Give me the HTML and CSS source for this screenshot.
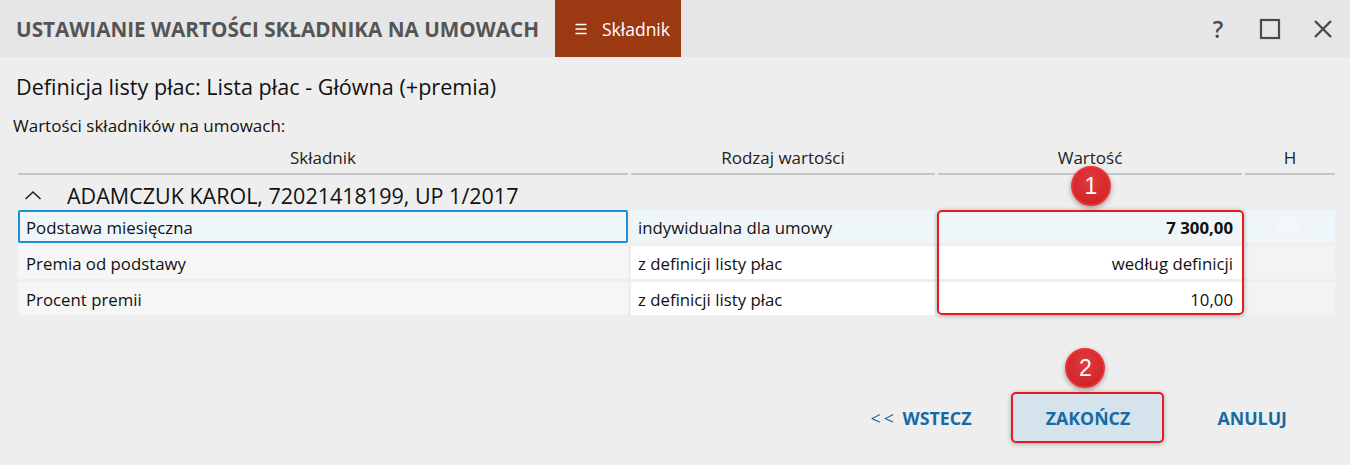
FILE: index.html
```html
<!DOCTYPE html>
<html lang="pl">
<head>
<meta charset="utf-8">
<link rel="stylesheet" href="styles.css">
</head>
<body>
<div class="window">
  <header class="titlebar">
    <h1 class="title">USTAWIANIE WARTOŚCI SKŁADNIKA NA UMOWACH</h1>
    <div class="tab">
      <svg class="burger" width="12" height="12" viewBox="0 0 12 12"><path d="M0.5 1.5 H11.5 M0.5 6 H11.5 M0.5 10.5 H11.5" stroke="#ffffff" stroke-width="1.3" fill="none"/></svg>
      <span>Składnik</span>
    </div>
    <div class="spacer"></div>
    <div class="wincontrols">
      <span class="help">?</span>
      <svg class="ico" width="22" height="22" viewBox="0 0 22 22"><rect x="2" y="2" width="18" height="18" fill="none" stroke="#4a4a4a" stroke-width="2.2"/></svg>
      <svg class="ico" width="22" height="22" viewBox="0 0 22 22"><path d="M3 3 L19 19 M19 3 L3 19" stroke="#4a4a4a" stroke-width="2.4" fill="none"/></svg>
    </div>
  </header>
  <main class="content">
    <div class="definition">Definicja listy płac: Lista płac - Główna (+premia)</div>
    <div class="caption">Wartości składników na umowach:</div>
    <div class="grid">
      <div class="head">
        <div class="hc c1">Składnik</div>
        <div class="hc c2">Rodzaj wartości</div>
        <div class="hc c3">Wartość</div>
        <div class="hc c4">H</div>
      </div>
      <div class="group">
        <svg class="caret" width="18" height="10" viewBox="0 0 18 10"><path d="M1.5 9 L9 2 L16.5 9" stroke="#222" stroke-width="1.6" fill="none"/></svg>
        <span>ADAMCZUK KAROL, 72021418199, UP 1/2017</span>
      </div>
      <div class="rows">
        <div class="row selected">
          <div class="cell c1 focus">Podstawa miesięczna</div>
          <div class="cell c2">indywidualna dla umowy</div>
          <div class="cell c3 num bold">7 300,00</div>
          <div class="cell c4"><span class="check"></span></div>
        </div>
        <div class="row">
          <div class="cell c1">Premia od podstawy</div>
          <div class="cell c2">z definicji listy płac</div>
          <div class="cell c3 num">według definicji</div>
          <div class="cell c4"></div>
        </div>
        <div class="row">
          <div class="cell c1">Procent premii</div>
          <div class="cell c2">z definicji listy płac</div>
          <div class="cell c3 num">10,00</div>
          <div class="cell c4"></div>
        </div>
        <div class="highlight"></div>
        <div class="badge b1">1</div>
      </div>
    </div>
    <footer class="actions">
      <button class="btn"><span class="arrows">&lt;&lt;</span> WSTECZ</button>
      <div class="primary-wrap">
        <button class="btn primary">ZAKOŃCZ</button>
        <div class="badge b2">2</div>
      </div>
      <button class="btn">ANULUJ</button>
    </footer>
  </main>
</div>
</body>
</html>
```
FILE: styles.css
```css
* { box-sizing: border-box; }
html, body { margin: 0; padding: 0; }
body {
  width: 1350px;
  height: 465px;
  background: #eeeeee;
  font-family: "Open Sans", "Noto Sans", sans-serif;
  color: #111111;
  overflow: hidden;
}
.window { display: flex; flex-direction: column; height: 465px; }
.titlebar {
  height: 58px;
  background: #e6e6e6;
  display: flex;
  align-items: stretch;
  border-bottom: 1px solid #ededed;
}
.title {
  margin: 0;
  padding-left: 16px;
  font-size: 20.7px;
  font-weight: 700;
  color: #555555;
  display: flex;
  align-items: center;
  width: 555px;
  white-space: nowrap;
}
.tab {
  background: #9b3a12;
  color: #ffffff;
  width: 126px;
  display: flex;
  align-items: center;
  gap: 15px;
  padding-left: 20px;
  font-size: 17.5px;
}
.burger { display: block; }
.spacer { flex: 1; }
.wincontrols {
  display: flex;
  align-items: center;
  gap: 31px;
  padding-right: 16px;
}
.help { font-size: 23px; color: #4a4a4a; font-weight: 600; width: 20px; text-align: center; }
.ico { display: block; }
.content { padding: 0 15px 0 18px; flex: 1; display: flex; flex-direction: column; }
.definition { font-size: 21.6px; margin-top: 15px; margin-left: -2px; line-height: 28px; white-space: nowrap; }
.caption { font-size: 17px; margin-top: 14px; margin-left: -5px; line-height: 22px; white-space: nowrap; }
.grid { margin-top: 4px; width: 1317px; }
.head { display: flex; height: 34px; gap: 3px; }
.hc {
  border-bottom: 2px solid #c6c6c6;
  display: flex; align-items: center; justify-content: center;
  font-size: 17px; color: #222;
}
.head .c1 { width: 610px; }
.head .c2 { width: 304px; }
.head .c3 { width: 304px; }
.head .c4 { width: 90px; }
.group {
  height: 35px;
  display: flex; align-items: center;
  font-size: 21.5px;
  padding-top: 5px;
  white-space: nowrap;
}
.caret { margin-left: 6px; margin-right: 25px; display: block; }
.rows { position: relative; display: flex; flex-direction: column; gap: 3px; }
.row { display: flex; height: 33px; gap: 3px; }
.cell {
  display: flex; align-items: center;
  font-size: 16.8px;
  padding: 2px 8px 0;
  background: #ffffff;
  white-space: nowrap;
}
.row .c1 { width: 610px; background: #f6f6f6; }
.row .c2 { width: 304px; padding-left: 7px; }
.row .c3 { width: 304px; }
.row .c4 { width: 90px; background: #f3f3f3; padding-top: 0; }
.num { justify-content: flex-end; padding-right: 9px; }
.bold { font-weight: 700; }
.row.selected .cell { background: #eef6fa; }
.row.selected .c1.focus { border: 2px solid #1b8fd8; border-radius: 2px; padding-left: 6px; padding-top: 2px; }
.check { display: block; width: 24px; height: 20px; background: #f4f6f7; margin-left: 24px; }
.highlight {
  position: absolute;
  left: 919px; top: 0; width: 307px; height: 105px;
  border: 2px solid #e8191f;
  border-radius: 5px;
  box-shadow: 0 1px 5px rgba(0,0,0,0.3);
  pointer-events: none;
}
.badge {
  position: absolute;
  width: 40px; height: 40px; border-radius: 50%;
  background: radial-gradient(circle at 50% 35%, #e23b3e 0%, #d2262b 70%, #c11d22 100%);
  border: 2px solid #ee3333;
  box-shadow: 0 2px 5px rgba(0,0,0,0.35);
  color: #ffffff;
  font-size: 23px;
  display: flex; align-items: center; justify-content: center;
  font-family: "Liberation Sans", Arial, sans-serif;
}
.b1 { left: 1053px; top: -44px; }
.actions {
  margin-top: 77px;
  display: flex;
  align-items: center;
  justify-content: flex-end;
  padding-right: 48px;
}
.btn {
  font-family: "Open Sans", "Noto Sans", sans-serif;
  font-weight: 700;
  font-size: 17.8px;
  color: #176aa5;
  background: transparent;
  border: none;
  padding: 0;
  white-space: nowrap;
}
.arrows { font-weight: 400; letter-spacing: 3px; margin-right: 1px; }
.primary-wrap { position: relative; margin: 0 53px 0 40px; }
.primary {
  width: 153px; height: 51px;
  background: #d5e3ec;
  border: 2px solid #e8191f;
  border-radius: 5px;
  box-shadow: 0 1px 5px rgba(0,0,0,0.3);
  display: block;
}
.b2 { left: 54px; top: -44px; }
```
